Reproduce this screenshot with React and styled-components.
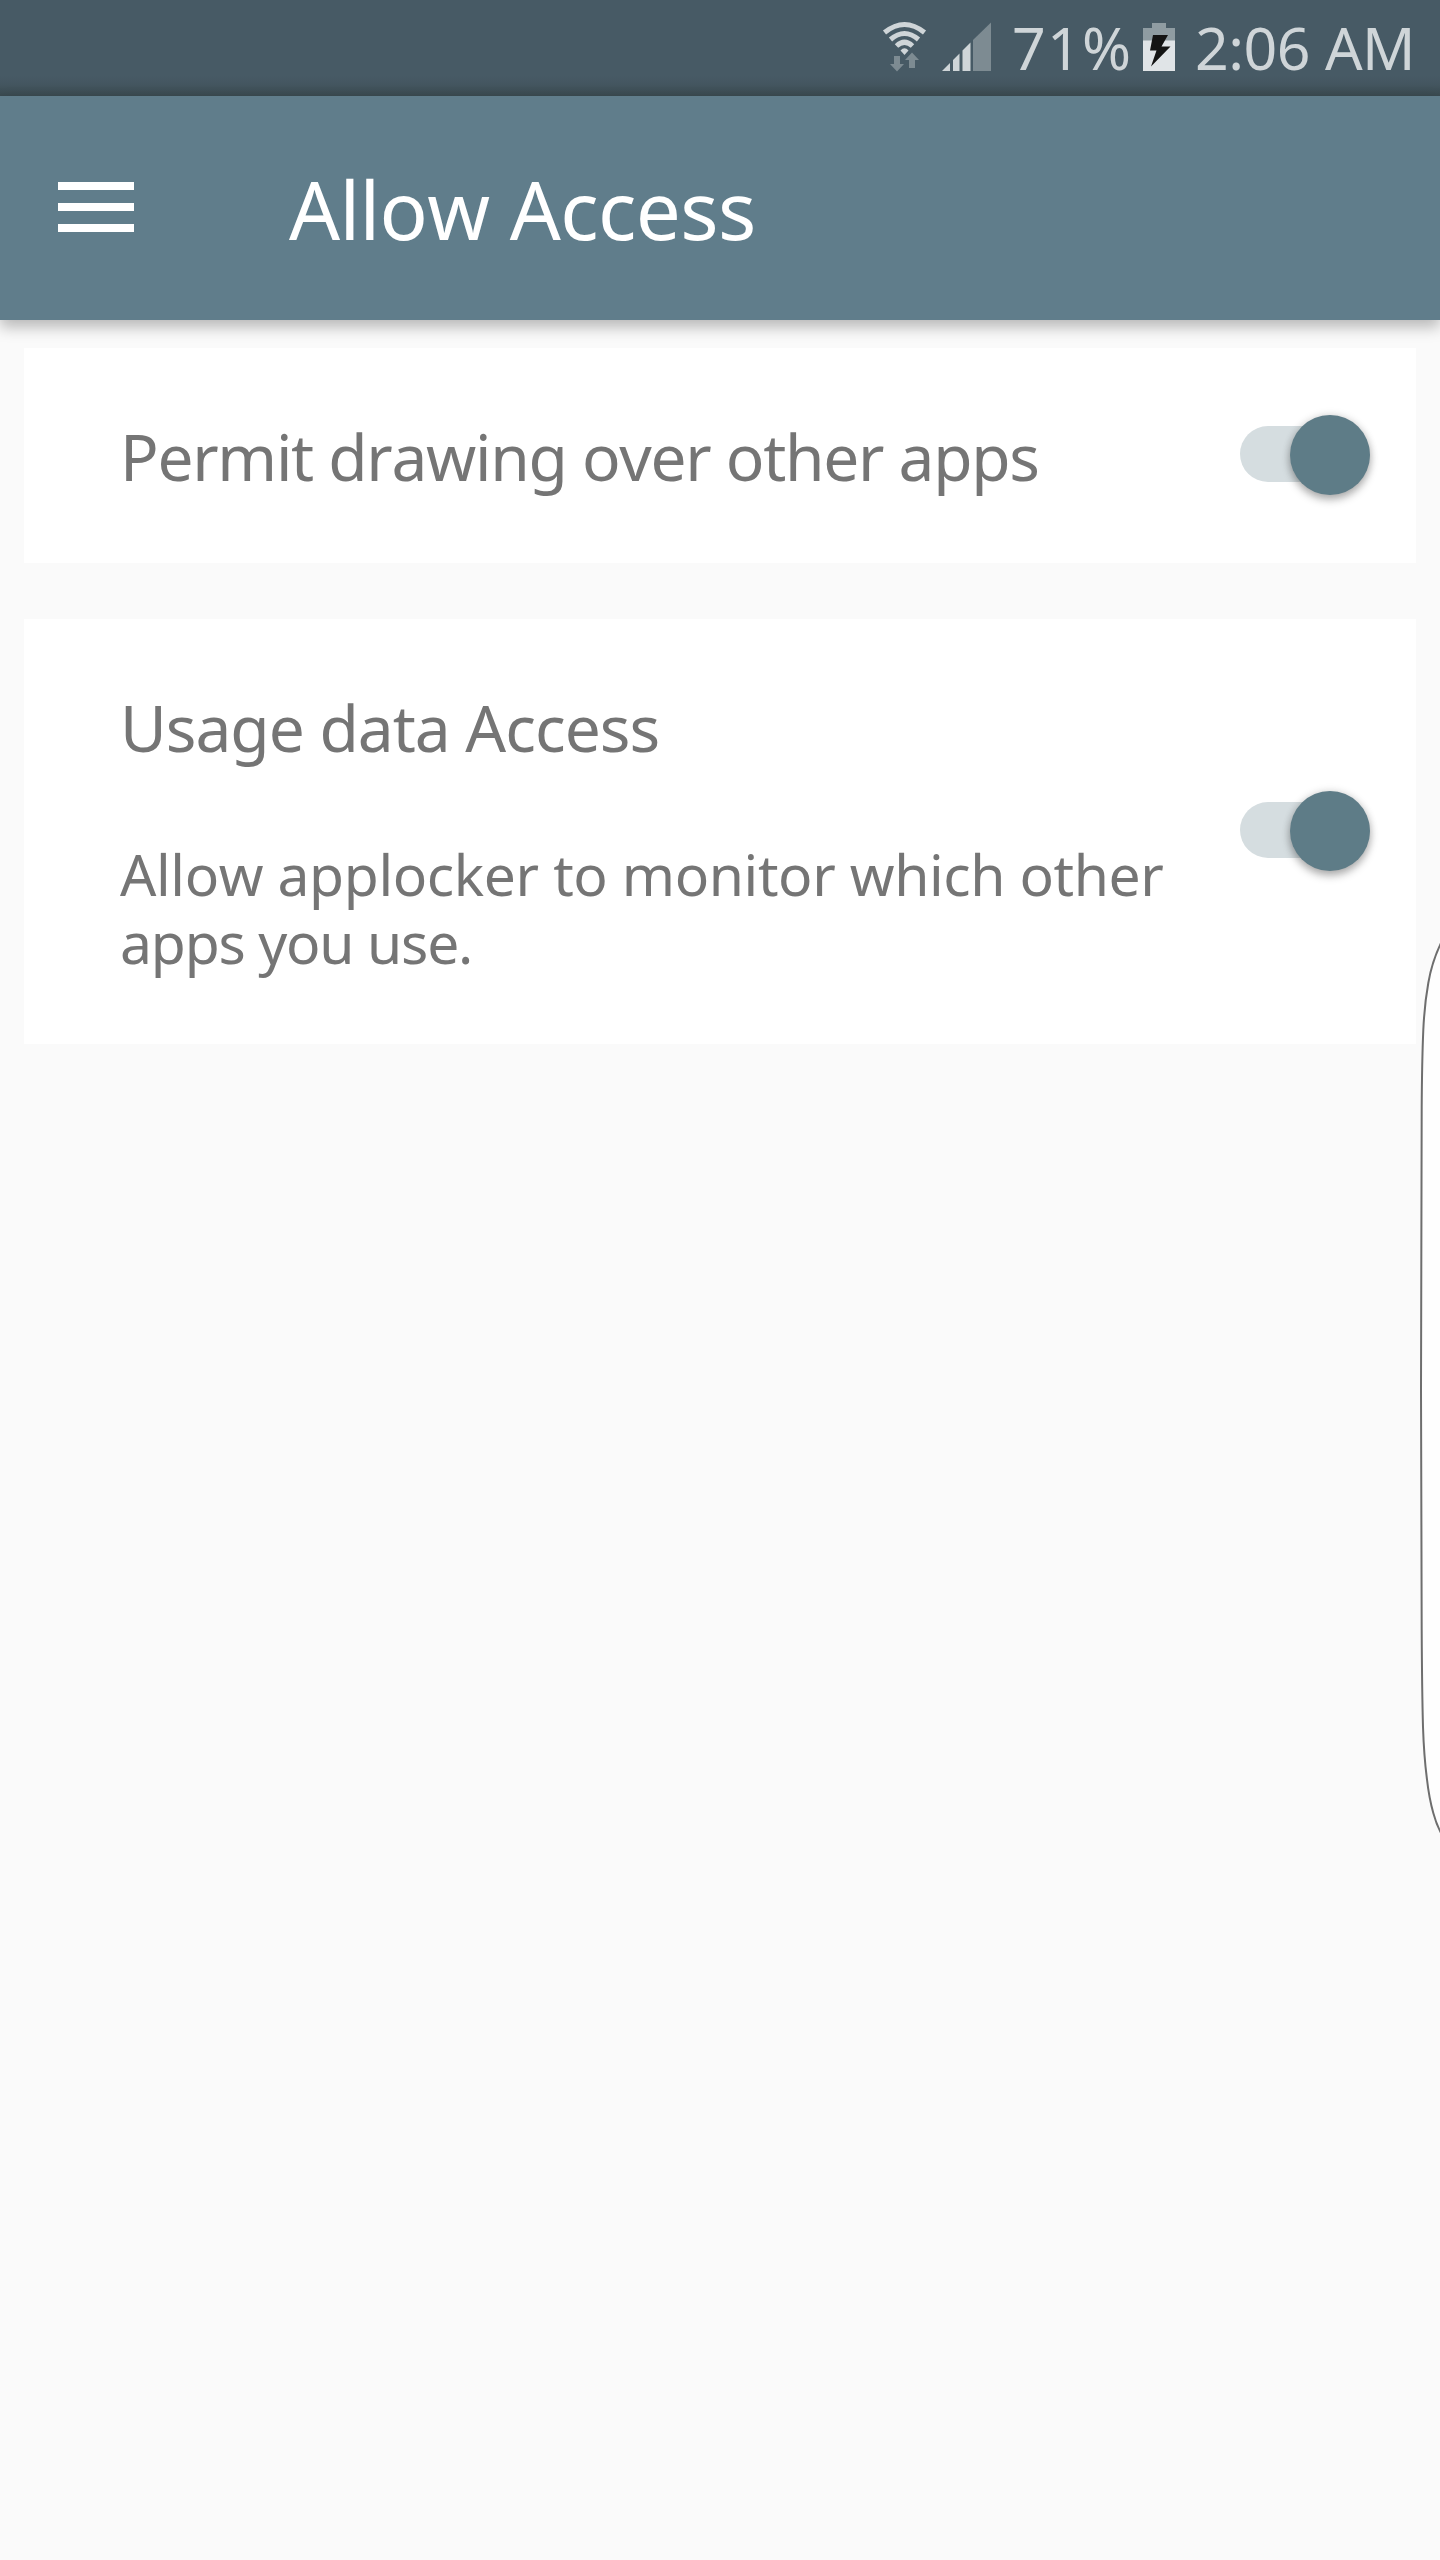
import React from "react";
import styled, { createGlobalStyle } from "styled-components";

const GlobalStyle = createGlobalStyle`
  * { box-sizing: border-box; }
  body { margin: 0; background: #fafafa; }
`;

const Screen = styled.div`
  position: relative;
  width: 1440px;
  height: 2560px;
  overflow: hidden;
  display: flex;
  flex-direction: column;
  background: #fafafa;
  font-family: "Noto Sans", sans-serif;
  font-kerning: none;
`;

const StatusBar = styled.header`
  height: 96px;
  flex: none;
  display: flex;
  align-items: flex-start;
  padding: 0 0 0 882px;
  background: linear-gradient(#475a65 0, #475a65 76px, #445660 84px, #3a4a50 96px);
`;

const StatusIcon = styled.svg`
  display: block;
  flex: none;
  margin-top: 20px;
  margin-right: ${(p) => p.$gap}px;
`;

const StatusText = styled.span`
  width: ${(p) => p.$width}px;
  flex: none;
  margin-top: 6px;
  font-size: 59px;
  line-height: 82px;
  letter-spacing: ${(p) => p.$spacing}px;
  white-space: nowrap;
  color: #cfd5d8;
`;

const Toolbar = styled.div`
  height: 224px;
  flex: none;
  display: flex;
  align-items: center;
  padding-left: 58px;
  background: #607d8b;
  box-shadow: 0 7px 14px rgba(0, 0, 0, 0.27);
  z-index: 1;
`;

const MenuButton = styled.button`
  width: 76px;
  height: 50px;
  padding: 0;
  border: 0;
  background: none;
  display: flex;
  flex-direction: column;
  justify-content: space-between;
  margin-bottom: 2px;
`;

const MenuLine = styled.span`
  width: 100%;
  height: 8px;
  background: #fff;
`;

const Title = styled.h1`
  margin: 2px 0 0 155px;
  font-size: 80px;
  line-height: 110px;
  font-weight: 400;
  letter-spacing: -0.62px;
  white-space: nowrap;
  color: #fff;
`;

const Settings = styled.main`
  display: flex;
  flex-direction: column;
  gap: 56px;
  padding: 28px 24px;
`;

const Card = styled.section`
  height: ${(p) => p.$height}px;
  display: flex;
  align-items: center;
  justify-content: space-between;
  padding: 0 46px 0 96px;
  background: #fff;
`;

const CardText = styled.div`
  align-self: flex-start;
  display: flex;
  flex-direction: column;
  gap: 68px;
  padding-top: 65px;
`;

const Label = styled.h2`
  margin: 0;
  font-size: 64px;
  line-height: 88px;
  font-weight: 400;
  letter-spacing: ${(p) => p.$spacing}px;
  white-space: nowrap;
  color: #757575;
`;

const Description = styled.p`
  margin: 0;
  font-size: 57px;
  line-height: 68px;
  letter-spacing: -1.2px;
  white-space: nowrap;
  color: #757575;

  &::first-line {
    letter-spacing: -0.4px;
  }
`;

const SwitchTrack = styled.button`
  width: 130px;
  height: 56px;
  flex: none;
  padding: 0;
  border: 0;
  border-radius: 28px;
  margin-bottom: 3px;
  display: flex;
  align-items: center;
  justify-content: flex-end;
  background: #d5dde0;
`;

const SwitchThumb = styled.span`
  width: 80px;
  height: 80px;
  flex: none;
  margin-top: 2px;
  border-radius: 50%;
  background: #5e7c87;
  box-shadow: 0 5px 8px rgba(0, 0, 0, 0.28), 0 0 8px rgba(0, 0, 0, 0.14);
`;

const EdgeHandle = styled.svg`
  position: absolute;
  right: 0;
  top: 930px;
`;

const Switch = () => (
  <SwitchTrack role="switch" aria-checked="true">
    <SwitchThumb />
  </SwitchTrack>
);

const WifiIcon = () => (
  <StatusIcon $gap={15} width="45" height="53" viewBox="0 0 45 53">
    <g fill="none" stroke="#cfd5d8" strokeWidth="5">
      <path d="M2.5 12.5Q22.500 -3.500 42.500 12.500" />
      <path d="M8.500 19.500Q22.500 7.500 36.500 19.500" />
      <path d="M14.500 26Q22.500 18.500 30.500 26" />
    </g>
    <path d="M18.500 30.500Q22.500 26 26.500 30.500L22.500 35Z" fill="#cfd5d8" />
    <path d="M12 36h6v8h4l-7 7.500-7-7.500h4zM27 48h6v-8h4l-7-7.500-7 7.500h4z" fill="#7d8b92" />
  </StatusIcon>
);

const SignalIcon = () => (
  <StatusIcon $gap={20} width="50" height="53" viewBox="0 0 50 53">
    <path d="M0 51L8 43V51ZM11 40L17.500 33.500V51H11ZM20.500 30.500L28.500 22.500V51H20.500Z" fill="#cfd5d8" />
    <path d="M31 20L49 2.500V51H31Z" fill="#7d8b92" />
  </StatusIcon>
);

const BatteryIcon = () => (
  <StatusIcon $gap={20} width="32" height="53" viewBox="0 0 32 53">
    <path d="M9 3H23V8H32V21H0V8H9Z" fill="#8f9ca2" />
    <path d="M0 20.500H32V51H0Z" fill="#e0e4e7" />
    <path d="M10 15H25L18.500 26.500H27.500L8 46.500L13.500 30.500H7Z" fill="#141414" />
  </StatusIcon>
);

export default function App() {
  return (
    <>
      <GlobalStyle />
      <Screen>
        <StatusBar>
          <WifiIcon />
          <SignalIcon />
          <StatusText $width={131} $spacing={1.2}>71%</StatusText>
          <BatteryIcon />
          <StatusText $width={240} $spacing={-0.5}>2:06 AM</StatusText>
        </StatusBar>
        <Toolbar>
          <MenuButton aria-label="Menu">
            <MenuLine />
            <MenuLine />
            <MenuLine />
          </MenuButton>
          <Title>Allow Access</Title>
        </Toolbar>
        <Settings>
          <Card $height={215}>
            <CardText>
              <Label $spacing={-1.3}>Permit drawing over other apps</Label>
            </CardText>
            <Switch />
          </Card>
          <Card $height={425}>
            <CardText>
              <Label $spacing={-1}>Usage data Access</Label>
              <Description>
                Allow applocker to monitor which other
                <br />
                apps you use.
              </Description>
            </CardText>
            <Switch />
          </Card>
        </Settings>
        <EdgeHandle width="22" height="920" viewBox="0 0 22 920">
          <path
            d="M24 11Q14 31 10.300 53Q6.500 74 5.300 100Q4 130 3.700 177Q3 290 3 460Q3 600 3.700 700Q4 760 5 797Q6 826 8.700 847Q11 868 15.300 883Q18.500 895 24 905Z"
            fill="#fefefe"
            stroke="#6e6e6e"
            strokeWidth="2"
          />
        </EdgeHandle>
      </Screen>
    </>
  );
}
